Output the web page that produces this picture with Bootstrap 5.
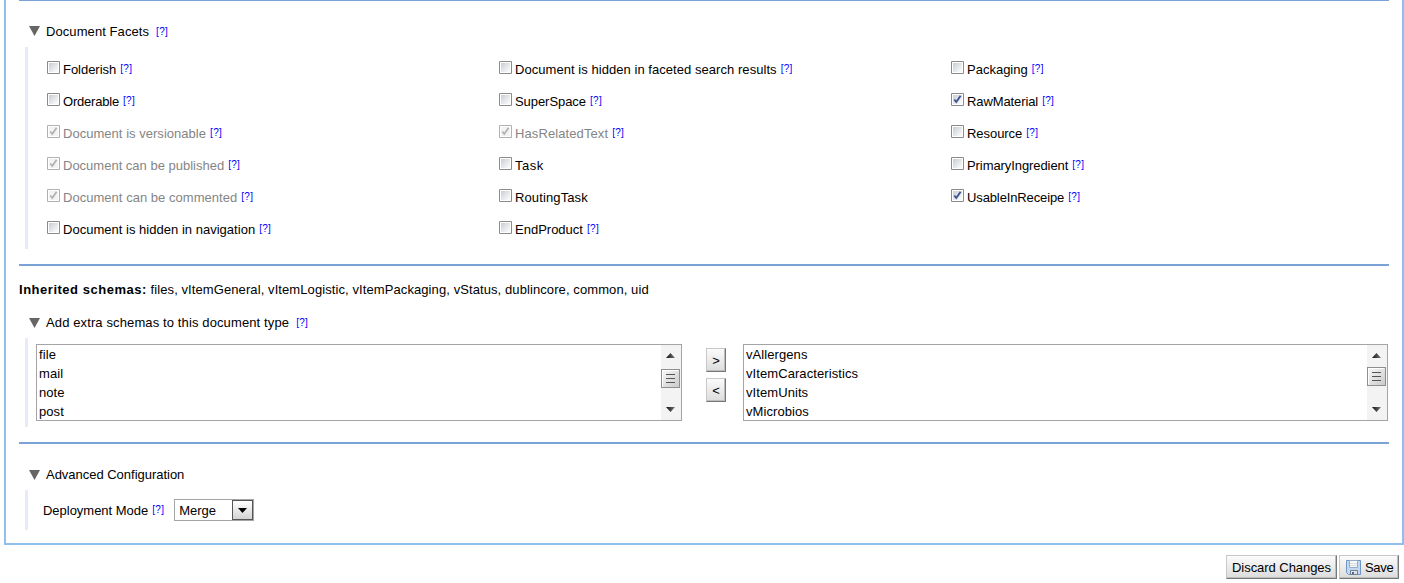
<!DOCTYPE html>
<html lang="en">
<head>
<meta charset="utf-8">
<title>Document type configuration</title>
<link href="https://cdn.jsdelivr.net/npm/bootstrap@5.3.0/dist/css/bootstrap.min.css" rel="stylesheet">
<style>
body{font:13px/20px "Liberation Sans",Arial,sans-serif;color:#000;background:#fff;height:583px;overflow:hidden;letter-spacing:.08px}
.panel{margin-left:4px;width:1400px;height:545px;border:2px solid #90bfee;border-top:0;padding:0 13px}
.rule{height:2px;background:#79a3d6;flex:none}
.rule.top{height:1px}
.title{height:20px;padding-left:10px}
.title svg{margin-right:6px}
.title.first{margin-top:21px}
.title.first svg{position:relative;top:-1px}
.help{font-size:10px;line-height:14px;color:#00f;text-decoration:none;letter-spacing:.3px;margin-left:4px;position:relative;top:-1px}
.title .help{margin-left:7px;top:0}
.block{margin-left:6px;border-left:3px solid #e6ecf7}
.facets{padding:7px 0 3px 19px;height:202px}
.facet-col{width:452px;flex:none}
.facet{height:32px}
.facet.off span{color:#858585}
.tick{width:13px;height:13px;margin-right:3px;position:relative;top:-3px;flex:none}
.bold-wide{letter-spacing:.52px}
.snug{letter-spacing:-.02px}
.listbox{height:77px;border:1px solid #a5a5a5}
.listbox ul{line-height:19px;padding-left:2px}
.btn-plain{border:1px solid;border-color:#c8c8c8 #777 #777 #c8c8c8;border-radius:0;background:linear-gradient(#fbfbfb,#dcdcdc);color:#000;padding:1px 0 0;font:inherit;letter-spacing:-.05px;height:24px;box-shadow:inset -1px -1px #bdbdbd}
.picker{width:80px;height:22px;border:1px solid #a5a5a5;padding-left:4px;position:relative;top:-1px}
.picker .drop{width:21px;height:20px;border:1px solid #555;background:linear-gradient(#fff,#d2d2d2)}
</style>
</head>
<body>
<svg width="0" height="0" class="position-absolute">
<defs>
<linearGradient id="face" x1="0" y1="0" x2="1" y2="1"><stop offset=".1" stop-color="#cdd1d8"/><stop offset=".85" stop-color="#f7f7f7"/></linearGradient>
<linearGradient id="thumb" x1="0" y1="0" x2="1" y2="1"><stop offset="0" stop-color="#fafafa"/><stop offset="1" stop-color="#c9c9c9"/></linearGradient>
<linearGradient id="arrow"><stop offset="0" stop-color="#111"/><stop offset="1" stop-color="#777"/></linearGradient>
<symbol id="box" viewBox="0 0 13 13"><path fill="#fff" stroke="#8b8b8b" d="M.5.5h12v12H.5z"/><path fill="url(#face)" d="M2 2h9v9H2z"/></symbol>
<symbol id="box-on" viewBox="0 0 13 13"><path fill="#fff" stroke="#8b8b8b" d="M.5.5h12v12H.5z"/><path fill="url(#face)" d="M2 2h9v9H2z"/><path fill="none" stroke="#3d5591" stroke-width="1.9" d="M3.300 6.500 5.300 9 9.600 2.800"/></symbol>
<symbol id="box-off" viewBox="0 0 13 13"><path fill="#fff" stroke="#b1b1b1" d="M.5.5h12v12H.5z"/><path fill="#f3f3f3" d="M2 2h9v9H2z"/><path fill="none" stroke="#b4b4b4" stroke-width="1.9" d="M3.300 6.500 5.300 9 9.600 2.800"/></symbol>
<symbol id="tri" viewBox="0 0 11 10"><path fill="#666" d="M0 0h11L5.500 10z"/></symbol>
<symbol id="grip" viewBox="0 0 19 19"><rect x=".5" y=".5" width="18" height="18" fill="url(#thumb)" stroke="#8f8f8f"/><path fill="none" stroke="#fff" d="M1.500 17.500v-16h16"/><path stroke="#555" d="M5 5.500h9M5 9.500h9M5 13.500h9"/></symbol>
</defs>
</svg>

<main class="panel d-flex flex-column">
  <div class="rule top"></div>
  <div class="title first d-flex align-items-center"><svg width="11" height="10"><use href="#tri"/></svg>Document Facets<a class="help">[?]</a></div>
  <div class="block facets d-flex" id="facets" style="margin-top:5px"></div>

  <div class="rule" style="margin-top:15px"></div>
  <div style="margin-top:14px;height:20px"><b class="bold-wide">Inherited schemas:</b> <span style="letter-spacing:.09px">files, vItemGeneral, vItemLogistic, vItemPackaging, vStatus, dublincore, common, uid</span></div>
  <div class="title d-flex align-items-center" style="margin-top:13px"><svg width="11" height="10" style="margin-top:-1px"><use href="#tri"/></svg><span style="letter-spacing:.12px">Add extra schemas to this document type</span><a class="help">[?]</a></div>
  <div class="block d-flex" style="margin-top:5px;height:89px;padding:6px 0 0 8px">
    <div class="listbox d-flex justify-content-between" style="width:646px">
      <ul class="list-unstyled mb-0"><li>file</li><li>mail</li><li>note</li><li>post</li></ul>
      <svg width="20" height="75" viewBox="0 0 20 75"><path fill="#f3f3f3" d="M0 0h20v75H0z"/><path fill="url(#arrow)" d="M5 13h9l-4.500-5zM5 62h9l-4.500 5z"/><use href="#grip" y="24" width="19" height="19"/></svg>
    </div>
    <div class="d-flex flex-column" style="margin:4px 17px 0 24px;gap:6px"><button class="btn-plain" style="width:20px">&gt;</button><button class="btn-plain" style="width:20px">&lt;</button></div>
    <div class="listbox d-flex justify-content-between" style="width:645px">
      <ul class="list-unstyled mb-0"><li>vAllergens</li><li>vItemCaracteristics</li><li>vItemUnits</li><li>vMicrobios</li></ul>
      <svg width="20" height="75" viewBox="0 0 20 75"><path fill="#f3f3f3" d="M0 0h20v75H0z"/><path fill="url(#arrow)" d="M5 13h9l-4.500-5zM5 62h9l-4.500 5z"/><use href="#grip" y="22" width="19" height="19"/></svg>
    </div>
  </div>

  <div class="rule" style="margin-top:15px"></div>
  <div class="title snug d-flex align-items-center" style="margin-top:21px"><svg width="11" height="10" style="margin-top:-1px"><use href="#tri"/></svg>Advanced Configuration</div>
  <div class="block d-flex align-items-center" style="margin-top:5px;height:40px;padding:2px 0 0 15px">
    <span class="snug">Deployment Mode</span><a class="help">[?]</a>
    <div class="picker snug d-flex justify-content-between" style="margin-left:10px"><span style="line-height:22px">Merge</span><span class="drop d-flex align-items-center justify-content-center"><svg width="9" height="5"><path d="M0 0h9L4.500 5z"/></svg></span></div>
  </div>
</main>

<footer class="d-flex justify-content-end" style="margin-top:10px;padding-right:5px;gap:2px">
  <button class="btn-plain" style="width:111px">Discard Changes</button>
  <button class="btn-plain d-flex align-items-center" style="width:60px;padding-left:6px"><svg width="15" height="15" viewBox="0 0 15 15" style="margin-right:4px"><path fill="#c3d8f0" stroke="#6f95c6" d="M.5.5h14v14h-12l-2-2z"/><path fill="#fbfbf6" stroke="#93adc9" d="M3.500.5h8v7h-8z"/><path stroke="#d5dde6" d="M4 3.500h7M4 5.500h7"/><path fill="#e3e3e3" stroke="#6c8096" d="M4.500 10.500h7v4h-7z"/><path fill="#4a6f9f" d="M6 12h2v2H6z"/></svg><span style="letter-spacing:-.3px">Save</span></button>
</footer>

<script src="https://cdn.jsdelivr.net/npm/bootstrap@5.3.0/dist/js/bootstrap.bundle.min.js"></script>
<script>
// Each facet: label, state (0 clear, 1 checked, 2 locked), has help link, tracking in px
const columns = [
  [["Folderish",0,1,-.03],["Orderable",0,1,-.2],["Document is versionable",2,1,.03],["Document can be published",2,1,0],["Document can be commented",2,1,.03],["Document is hidden in navigation",0,1,.02]],
  [["Document is hidden in faceted search results",0,1,.05],["SuperSpace",0,1,-.06],["HasRelatedText",2,1,.1],["Task",0,0,.5],["RoutingTask",0,0,.12],["EndProduct",0,1,0]],
  [["Packaging",0,1,0],["RawMaterial",1,1,-.1],["Resource",0,1,-.05],["PrimaryIngredient",0,1,-.08],["UsableInReceipe",1,1,-.12]]
];
const icons = ["box", "box-on", "box-off"];
document.getElementById("facets").innerHTML = columns.map(rows =>
  '<div class="facet-col">' + rows.map(([label, state, help, track]) =>
    `<div class="facet d-flex align-items-center${state === 2 ? " off" : ""}"><svg class="tick"><use href="#${icons[state]}"/></svg><span style="letter-spacing:${track}px">${label}</span>${help ? '<a class="help">[?]</a>' : ""}</div>`
  ).join("") + "</div>").join("");
</script>
</body>
</html>
